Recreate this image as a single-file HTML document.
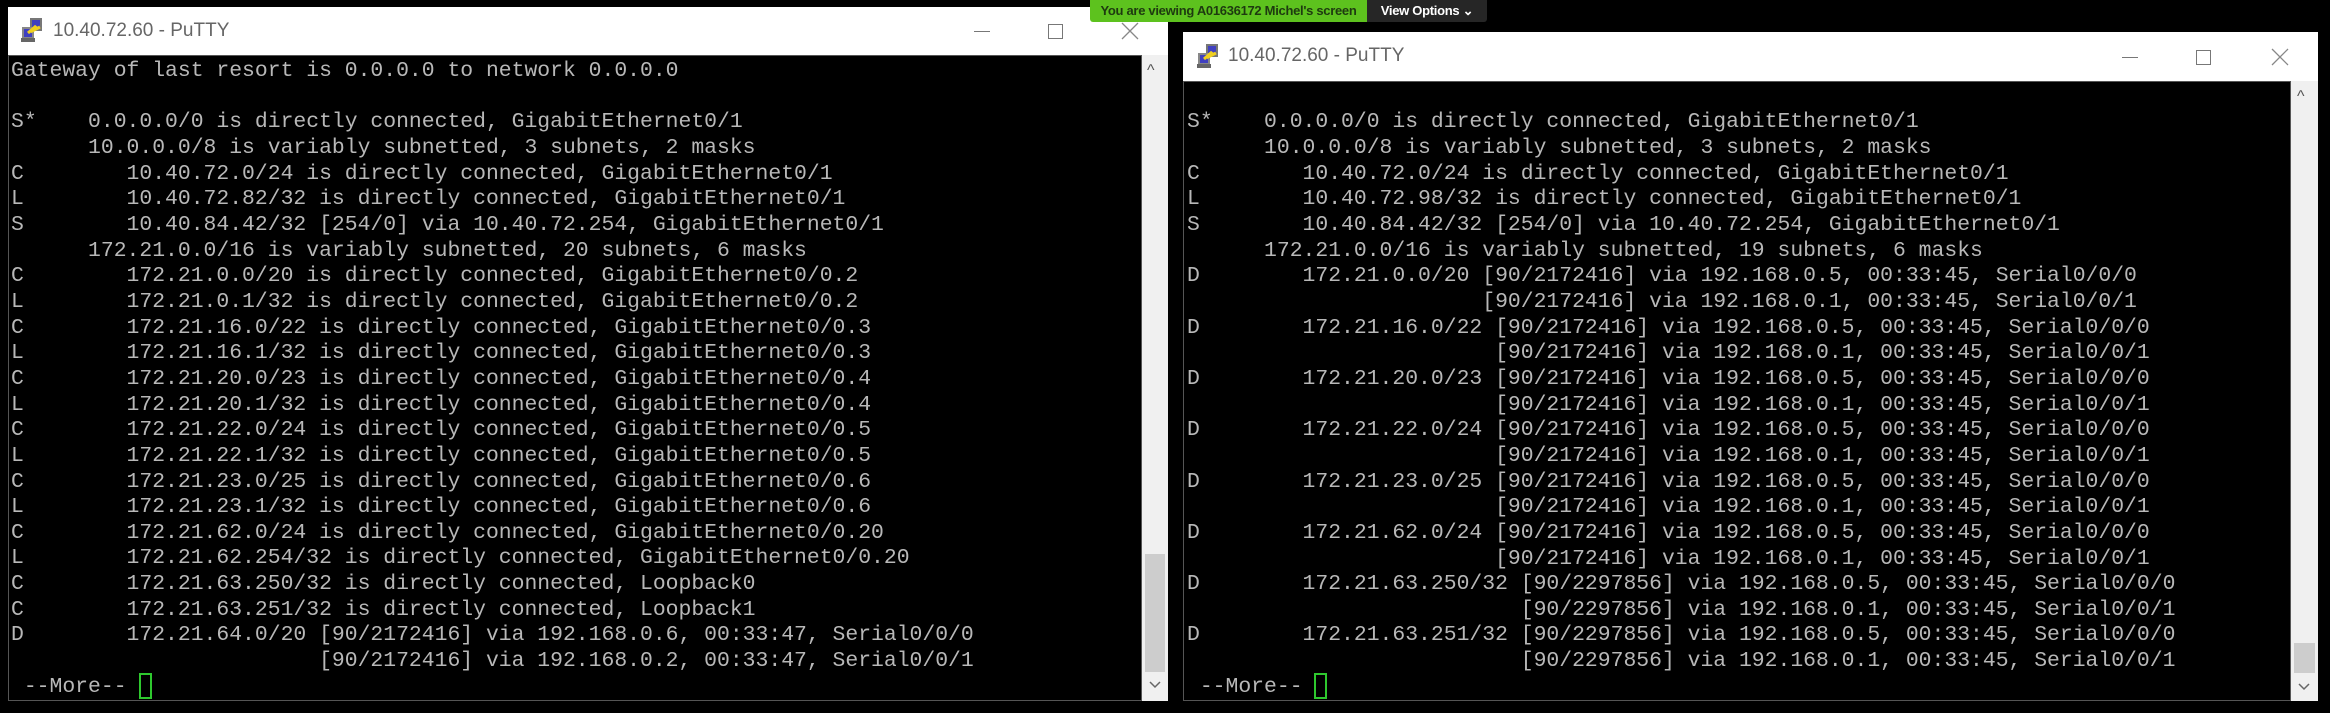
<!DOCTYPE html>
<html><head><meta charset="utf-8"><style>
html,body{margin:0;padding:0;background:#000;width:2330px;height:713px;overflow:hidden;position:relative}
.tb{position:absolute;background:#fff}
.tt{position:absolute;font-family:"Liberation Sans",sans-serif;font-size:19px;color:#666;white-space:nowrap}
.term{position:absolute;background:#000;border:1px solid #555;box-sizing:border-box}
pre{position:absolute;margin:0;font-family:"Liberation Mono",monospace;font-size:21.4px;line-height:25.65px;color:#b8b8b8;white-space:pre}
.sb{position:absolute;background:#f0f0f0}
.thumb{position:absolute;background:#cdcdcd}
.ctl{position:absolute;color:#888}
.cur{position:absolute;border:2px solid #2ec82e;box-sizing:border-box;width:13px;height:26px}
</style></head><body>

<!-- Left window -->
<div class="tb" style="left:8px;top:7px;width:1160px;height:48px"></div>
<svg style="position:absolute;left:20px;top:17px" width="26" height="26" viewBox="0 0 26 26">
<rect x="10" y="1" width="12" height="13" fill="#777"/><rect x="12" y="3" width="8" height="8" fill="#4040c0"/>
<rect x="2" y="10" width="12" height="13" fill="#888"/><rect x="4" y="12" width="8" height="8" fill="#4040c0"/>
<rect x="1" y="21" width="14" height="4" fill="#666"/>
<path d="M8 16 L16 9 L14 13 L20 10" stroke="#f0d020" stroke-width="3" fill="none"/>
</svg>
<div class="tt" style="left:53px;top:20px">10.40.72.60 - PuTTY</div>
<div class="ctl" style="left:974px;top:31px;width:16px;height:1px;background:#777"></div>
<div class="ctl" style="left:1048px;top:24px;width:13px;height:13px;border:1px solid #777"></div>
<svg style="position:absolute;left:1121px;top:22px" width="18" height="18"><path d="M1 1L17 17M17 1L1 17" stroke="#888" stroke-width="1.3"/></svg>

<div class="term" style="left:8px;top:55px;width:1134px;height:646px"></div>
<div class="sb" style="left:1142px;top:55px;width:26px;height:646px"></div>
<div class="thumb" style="left:1145px;top:554px;width:20px;height:118px"></div>
<div style="position:absolute;left:1147px;top:62px;font:16px 'Liberation Sans';color:#555">^</div>
<svg style="position:absolute;left:1149px;top:681px" width="12" height="8"><path d="M1 1L6 6L11 1" stroke="#666" stroke-width="1.5" fill="none"/></svg>

<pre style="left:11px;top:59px">
Gateway of last resort is 0.0.0.0 to network 0.0.0.0

S*    0.0.0.0/0 is directly connected, GigabitEthernet0/1
      10.0.0.0/8 is variably subnetted, 3 subnets, 2 masks
C        10.40.72.0/24 is directly connected, GigabitEthernet0/1
L        10.40.72.82/32 is directly connected, GigabitEthernet0/1
S        10.40.84.42/32 [254/0] via 10.40.72.254, GigabitEthernet0/1
      172.21.0.0/16 is variably subnetted, 20 subnets, 6 masks
C        172.21.0.0/20 is directly connected, GigabitEthernet0/0.2
L        172.21.0.1/32 is directly connected, GigabitEthernet0/0.2
C        172.21.16.0/22 is directly connected, GigabitEthernet0/0.3
L        172.21.16.1/32 is directly connected, GigabitEthernet0/0.3
C        172.21.20.0/23 is directly connected, GigabitEthernet0/0.4
L        172.21.20.1/32 is directly connected, GigabitEthernet0/0.4
C        172.21.22.0/24 is directly connected, GigabitEthernet0/0.5
L        172.21.22.1/32 is directly connected, GigabitEthernet0/0.5
C        172.21.23.0/25 is directly connected, GigabitEthernet0/0.6
L        172.21.23.1/32 is directly connected, GigabitEthernet0/0.6
C        172.21.62.0/24 is directly connected, GigabitEthernet0/0.20
L        172.21.62.254/32 is directly connected, GigabitEthernet0/0.20
C        172.21.63.250/32 is directly connected, Loopback0
C        172.21.63.251/32 is directly connected, Loopback1
D        172.21.64.0/20 [90/2172416] via 192.168.0.6, 00:33:47, Serial0/0/0
                        [90/2172416] via 192.168.0.2, 00:33:47, Serial0/0/1
 --More-- </pre>
<div class="cur" style="left:139px;top:673px"></div>

<!-- Banner -->
<div style="position:absolute;left:1090px;top:0;width:277px;height:22px;background:#5dc21e;border-radius:0 0 0 3px;font:bold 13px 'Liberation Sans',sans-serif;color:#1e3a10;text-align:center;line-height:22px;letter-spacing:-0.3px">You are viewing A01636172 Michel's screen</div>
<div style="position:absolute;left:1367px;top:0;width:120px;height:22px;background:#262626;border-radius:0 0 3px 0;font:bold 13px 'Liberation Sans',sans-serif;color:#fff;text-align:center;line-height:22px;letter-spacing:-0.3px">View Options ⌄</div>

<!-- Right window -->
<div class="tb" style="left:1183px;top:32px;width:1135px;height:49px"></div>
<svg style="position:absolute;left:1196px;top:43px" width="26" height="26" viewBox="0 0 26 26">
<rect x="10" y="1" width="12" height="13" fill="#777"/><rect x="12" y="3" width="8" height="8" fill="#4040c0"/>
<rect x="2" y="10" width="12" height="13" fill="#888"/><rect x="4" y="12" width="8" height="8" fill="#4040c0"/>
<rect x="1" y="21" width="14" height="4" fill="#666"/>
<path d="M8 16 L16 9 L14 13 L20 10" stroke="#f0d020" stroke-width="3" fill="none"/>
</svg>
<div class="tt" style="left:1228px;top:45px">10.40.72.60 - PuTTY</div>
<div class="ctl" style="left:2122px;top:57px;width:16px;height:1px;background:#777"></div>
<div class="ctl" style="left:2196px;top:50px;width:13px;height:13px;border:1px solid #777"></div>
<svg style="position:absolute;left:2271px;top:48px" width="18" height="18"><path d="M1 1L17 17M17 1L1 17" stroke="#888" stroke-width="1.3"/></svg>

<div class="term" style="left:1183px;top:81px;width:1108px;height:620px"></div>
<div class="sb" style="left:2291px;top:81px;width:27px;height:620px"></div>
<div class="thumb" style="left:2294px;top:643px;width:21px;height:30px"></div>
<div style="position:absolute;left:2297px;top:88px;font:16px 'Liberation Sans';color:#555">^</div>
<svg style="position:absolute;left:2298px;top:683px" width="12" height="8"><path d="M1 1L6 6L11 1" stroke="#666" stroke-width="1.5" fill="none"/></svg>

<pre style="left:1187px;top:84.7px">

S*    0.0.0.0/0 is directly connected, GigabitEthernet0/1
      10.0.0.0/8 is variably subnetted, 3 subnets, 2 masks
C        10.40.72.0/24 is directly connected, GigabitEthernet0/1
L        10.40.72.98/32 is directly connected, GigabitEthernet0/1
S        10.40.84.42/32 [254/0] via 10.40.72.254, GigabitEthernet0/1
      172.21.0.0/16 is variably subnetted, 19 subnets, 6 masks
D        172.21.0.0/20 [90/2172416] via 192.168.0.5, 00:33:45, Serial0/0/0
                       [90/2172416] via 192.168.0.1, 00:33:45, Serial0/0/1
D        172.21.16.0/22 [90/2172416] via 192.168.0.5, 00:33:45, Serial0/0/0
                        [90/2172416] via 192.168.0.1, 00:33:45, Serial0/0/1
D        172.21.20.0/23 [90/2172416] via 192.168.0.5, 00:33:45, Serial0/0/0
                        [90/2172416] via 192.168.0.1, 00:33:45, Serial0/0/1
D        172.21.22.0/24 [90/2172416] via 192.168.0.5, 00:33:45, Serial0/0/0
                        [90/2172416] via 192.168.0.1, 00:33:45, Serial0/0/1
D        172.21.23.0/25 [90/2172416] via 192.168.0.5, 00:33:45, Serial0/0/0
                        [90/2172416] via 192.168.0.1, 00:33:45, Serial0/0/1
D        172.21.62.0/24 [90/2172416] via 192.168.0.5, 00:33:45, Serial0/0/0
                        [90/2172416] via 192.168.0.1, 00:33:45, Serial0/0/1
D        172.21.63.250/32 [90/2297856] via 192.168.0.5, 00:33:45, Serial0/0/0
                          [90/2297856] via 192.168.0.1, 00:33:45, Serial0/0/1
D        172.21.63.251/32 [90/2297856] via 192.168.0.5, 00:33:45, Serial0/0/0
                          [90/2297856] via 192.168.0.1, 00:33:45, Serial0/0/1
 --More-- </pre>
<div class="cur" style="left:1314px;top:673px"></div>
</body></html>
